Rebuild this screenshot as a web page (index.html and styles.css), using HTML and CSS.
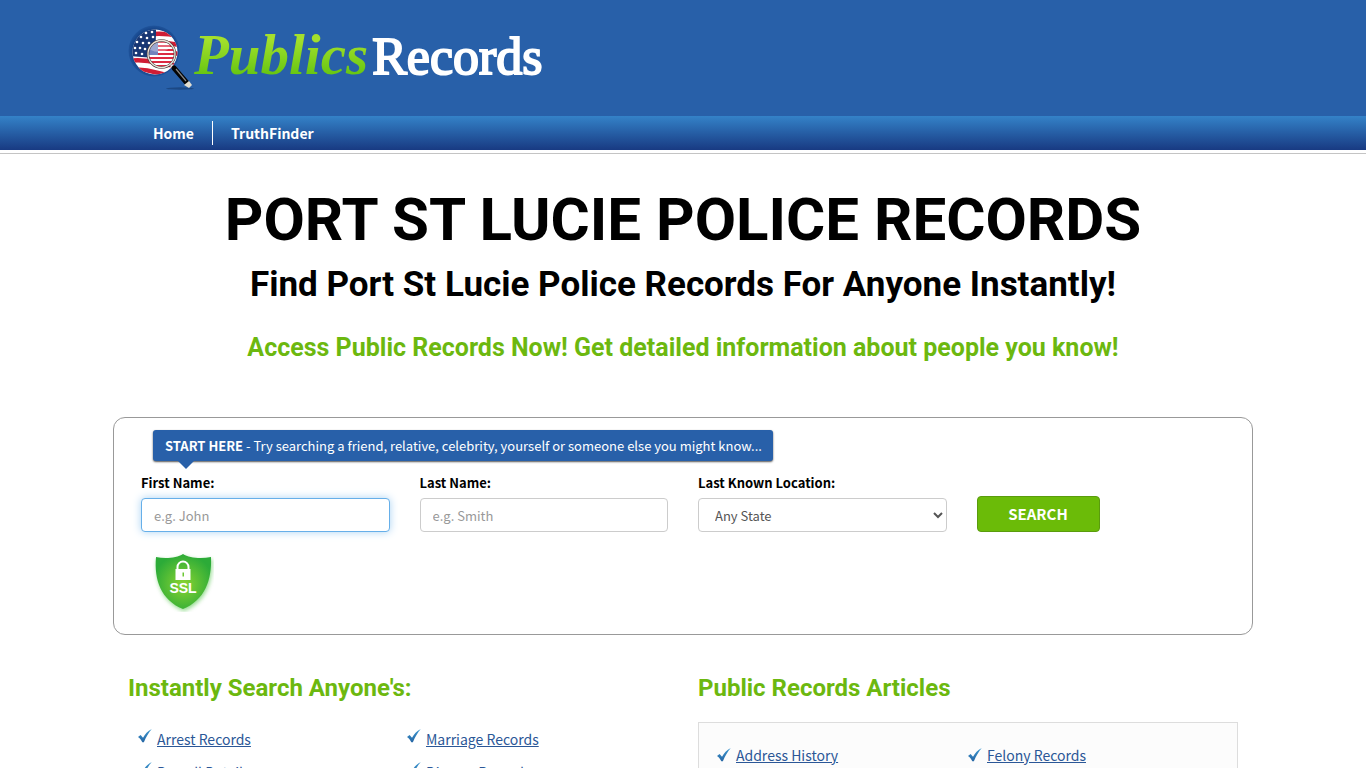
FILE: index.html
```html
<!DOCTYPE html>
<html lang="en">
<head>
<meta charset="utf-8">
<title>Port St Lucie Police Records</title>
<link rel="stylesheet" href="styles.css">
</head>
<body>
<svg class="defs" width="0" height="0" aria-hidden="true">
  <defs>
    <linearGradient id="tick" x1="0" y1="0" x2="0" y2="1"><stop offset="0" stop-color="#3b97d0"/><stop offset="1" stop-color="#2767a5"/></linearGradient>
    <symbol id="check" viewBox="0 0 14 14"><path fill="url(#tick)" d="M0 8 2.600 6 5 8.800C7 5 9.600 2.300 13.800 0 10.600 3.600 8.200 7.700 5.900 13.200H4.300C3.300 11 1.900 9.400 0 8Z"/></symbol>
  </defs>
</svg>

<header class="header">
  <div class="container">
    <a class="logo" href="#">
      <svg class="logo-mark" viewBox="0 0 66 68" aria-hidden="true">
        <defs>
          <clipPath id="flagClip"><circle cx="27" cy="28" r="22.500"/></clipPath>
          <clipPath id="lensClip"><circle cx="33.500" cy="30" r="13"/></clipPath>
          <radialGradient id="halo"><stop offset=".8" stop-color="#123f83"/><stop offset="1" stop-color="#1f549c"/></radialGradient>
        </defs>
        <ellipse cx="52" cy="64.500" rx="14" ry="1.200" fill="#173e75" opacity=".7"/>
        <circle cx="26" cy="27" r="25.500" fill="url(#halo)"/>
        <g clip-path="url(#flagClip)">
          <path fill="#fff" d="M0 0h60v60H0z"/>
          <path stroke="#cf1d35" stroke-width="4.500" fill="none" d="M25 10q15-1 30 3M25 19q15-1 30 3M25 28q15-1 30 3M0 37q15-2 30 2t30 1M0 46q15-2 30 3t30 1"/>
          <path fill="#183774" d="M0 0h28v10l-1 24L0 32z"/>
          <g fill="#fff">
            <circle cx="18" cy="9" r="1.300"/><circle cx="24" cy="8" r="1.300"/>
            <circle cx="13" cy="13" r="1.300"/><circle cx="19" cy="14" r="1.300"/><circle cx="25" cy="13" r="1.300"/>
            <circle cx="9" cy="18" r="1.300"/><circle cx="15" cy="19" r="1.300"/><circle cx="21" cy="19" r="1.300"/>
            <circle cx="7" cy="24" r="1.300"/><circle cx="12" cy="24" r="1.300"/><circle cx="17" cy="25" r="1.300"/>
            <circle cx="8" cy="29" r="1.300"/><circle cx="14" cy="30" r="1.300"/>
          </g>
        </g>
        <g clip-path="url(#lensClip)">
          <path fill="#fff" d="M20 15h30v30H20z"/>
          <path stroke="#dc2941" stroke-width="2" d="M20 18h30M20 22h30M20 26h30M20 30h30M20 34h30M20 38h30M20 42h30"/>
          <path fill="#7383bd" d="M20 15h10v16H20z"/>
          <ellipse cx="31" cy="22" rx="11" ry="6" fill="#fff" opacity=".3"/>
        </g>
        <circle cx="33.500" cy="30" r="13.500" fill="none" stroke="#443c3c" stroke-width="2.500"/>
        <circle cx="33.500" cy="30" r="13.500" fill="none" stroke="#eee2d8" stroke-width="1.300"/>
        <path d="m43 41 4 4" stroke="#ddd" stroke-width="3"/>
        <path d="m46 44 13 15" stroke="#050505" stroke-width="5" stroke-linecap="round"/>
        <path d="m48 45 10 12" stroke="#888" stroke-width="1.200"/>
        <path d="m56 61 5-4 3 4-3 3Z" fill="#e3dfd1"/>
      </svg>
      <span class="logo-publics">Publics</span><span class="logo-records">Records</span>
    </a>
  </div>
</header>

<nav class="nav">
  <ul class="container nav-list">
    <li><a href="#">Home</a></li>
    <li><a href="#">TruthFinder</a></li>
  </ul>
</nav>

<main class="page">
  <div class="container">
    <div class="intro">
      <h1>PORT ST LUCIE POLICE RECORDS</h1>
      <h2>Find Port St Lucie Police Records For Anyone Instantly!</h2>
      <h3>Access Public Records Now! Get detailed information about people you know!</h3>
    </div>

    <form class="search">
      <p class="hint"><strong>START HERE</strong> - Try searching a friend, relative, celebrity, yourself or someone else you might know...</p>
      <div class="fields">
        <div class="field">
          <label for="first">First Name:</label>
          <input class="control active" id="first" type="text" placeholder="e.g. John">
        </div>
        <div class="field">
          <label for="last">Last Name:</label>
          <input class="control" id="last" type="text" placeholder="e.g. Smith">
        </div>
        <div class="field">
          <label for="state">Last Known Location:</label>
          <select class="control" id="state"><option>Any State</option></select>
        </div>
        <div class="field"><button class="submit" type="submit">SEARCH</button></div>
      </div>
      <svg class="ssl" viewBox="0 0 62 60" role="img" aria-label="SSL">
        <defs>
          <radialGradient id="shield" cx=".5" cy=".55" r=".55"><stop offset="0" stop-color="#8ad431"/><stop offset="1" stop-color="#2cab38"/></radialGradient>
          <filter id="glow" x="-20%" y="-20%" width="140%" height="140%"><feGaussianBlur stdDeviation="2"/></filter>
        </defs>
        <path d="M32 4C26 8 14 9 5 7 3 30 10 50 32 59 54 50 61 30 60 7 50 9 38 8 32 4Z" fill="#63cb5b" opacity=".7" filter="url(#glow)"/>
        <path d="M31 2C25 6 13 7 4 5 2 28 9 48 31 57 53 48 60 28 59 5 49 7 37 6 31 2Z" fill="url(#shield)"/>
        <path d="M25.500 18v-3a5.500 5.500 0 0 1 11 0v3" fill="none" stroke="#fff" stroke-width="2"/>
        <path d="M23.500 17h15v11h-15zM30.500 20.500v4H32v-4z" fill="#fff" fill-rule="evenodd"/>
        <text class="ssl-text" x="31" y="41" text-anchor="middle">SSL</text>
      </svg>
    </form>

    <div class="columns">
      <section>
        <h4>Instantly Search Anyone's:</h4>
        <ul class="links links-left">
          <li><svg class="check"><use href="#check"/></svg><a href="#">Arrest Records</a></li>
          <li><svg class="check"><use href="#check"/></svg><a href="#">Marriage Records</a></li>
          <li><svg class="check"><use href="#check"/></svg><a href="#">Payroll Details</a></li>
          <li><svg class="check"><use href="#check"/></svg><a href="#">Divorce Records</a></li>
        </ul>
      </section>
      <section>
        <h4>Public Records Articles</h4>
        <ul class="links panel">
          <li><svg class="check"><use href="#check"/></svg><a href="#">Address History</a></li>
          <li><svg class="check"><use href="#check"/></svg><a href="#">Felony Records</a></li>
        </ul>
      </section>
    </div>
  </div>
</main>
</body>
</html>
```

FILE: styles.css
```css
* { box-sizing: border-box; }
html, body { height: 100%; }
body {
  margin: 0;
  overflow: hidden;
  background: #fff;
  color: #000;
  font-family: "Noto Sans CJK SC", "Noto Sans", sans-serif;
  font-size: 14px;
  line-height: 20px;
}
.defs { position: absolute; }
.container { max-width: 1140px; margin: 0 auto; }
h1, h2, h3, h4, p, ul { margin: 0; padding: 0; }
h1, h2, h3, h4 { font-family: Roboto, sans-serif; font-weight: 700; }
ul { list-style: none; }

.header { background: #2860a9; padding: 24px 0; }
.logo {
  display: flex;
  align-items: center;
  height: 68px;
  padding-left: 15px;
  color: #fff;
  font-family: "Liberation Serif", serif;
  line-height: 68px;
  text-decoration: none;
}
.logo-mark { width: 66px; height: 68px; }
.logo-publics {
  padding: 0 4px 6px 0;
  background: linear-gradient(#a4e02c 25%, #63c411 75%);
  background-clip: text;
  -webkit-background-clip: text;
  color: transparent;
  font-size: 57px;
  font-style: italic;
  font-weight: 700;
}
.logo-records { padding-bottom: 2px; font-size: 52px; -webkit-text-stroke: 2px #fff; }

.nav { background: linear-gradient(#3482c8, #183a82); }
.nav-list { display: flex; align-items: center; height: 34px; padding-left: 22px; }
.nav-list a { display: block; padding: 0 18px; color: #fff; font-weight: 700; line-height: 24px; text-decoration: none; }
.nav-list li + li { border-left: 1px solid #fff; }

.page { margin-top: 3px; border-top: 1px solid #c4c4c4; }
.intro { padding: 33px 15px 0; text-align: center; }
h1 { font-size: 60px; line-height: 66px; }
h2 { margin-top: 12px; font-size: 35px; line-height: 40px; }
h3 { margin-top: 28px; color: #6cb80f; font-size: 25px; line-height: 30px; }

.search {
  margin-top: 54px;
  padding: 12px 27px 22px;
  border: 1px solid #999;
  border-radius: 12px;
}
.hint {
  position: relative;
  width: 620px;
  max-width: 100%;
  margin-left: 12px;
  padding: 6px 4px 5px 12px;
  border-radius: 3px;
  background: #2860a9;
  box-shadow: 0 1px 2px #555;
  color: #fff;
  font-size: 13px;
}
.hint strong { font-weight: 700; }
.hint::after {
  content: "";
  position: absolute;
  top: 100%;
  left: 25px;
  border: 8px solid transparent;
  border-top-color: #2860a9;
  border-bottom: 0;
}
.fields { display: grid; grid-template-columns: repeat(4, 1fr); gap: 30px; margin-top: 12px; }
.field { display: flex; flex-direction: column; }
.field label { margin-bottom: 5px; font-size: 13px; font-weight: 700; }
.control {
  width: 100%;
  height: 34px;
  padding: 6px 12px;
  border: 1px solid #ccc;
  border-radius: 4px;
  background: #fff;
  color: #555;
  font: inherit;
  font-size: 13px;
}
.control::placeholder { color: #999; }
.active { border-color: #66afe9; box-shadow: 0 0 8px #a9d3f3; }
.submit {
  width: 123px;
  height: 36px;
  margin-top: 23px;
  border: 1px solid #5a9c0d;
  border-radius: 4px;
  background: #6bbb08;
  color: #fff;
  font: inherit;
  font-size: 15px;
  font-weight: 700;
}
.ssl { display: block; width: 62px; height: 60px; margin: 20px 0 0 11px; }
.ssl-text { fill: #fff; font: 700 14px "Liberation Sans", sans-serif; }

.columns { display: grid; grid-template-columns: 1fr 1fr; gap: 30px; padding: 38px 15px 0; }
h4 { color: #6cb80f; font-size: 24px; line-height: 30px; }
.links { display: grid; grid-template-columns: 1fr 1fr; row-gap: 13px; }
.links-left { margin-top: 26px; padding-left: 10px; margin-right: -8px; }
.links li { display: flex; gap: 5px; }
.links a { color: #2b5797; text-decoration: underline; }
.check { width: 14px; height: 14px; flex: none; }
.panel { margin-top: 19px; padding: 22px 18px; border: 1px solid #ddd; background: #fcfcfc; }
.panel .check { margin-top: 3px; }
```
